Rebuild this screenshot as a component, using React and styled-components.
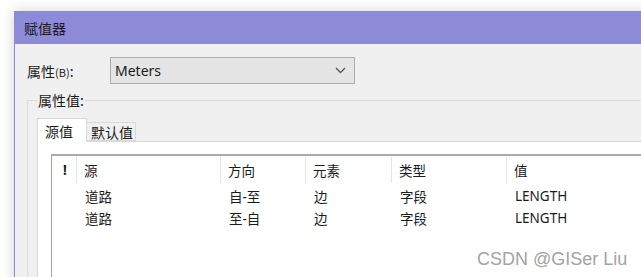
import React from 'react'
import styled, { createGlobalStyle } from 'styled-components'

const GlobalStyle = createGlobalStyle`
  html, body {
    margin: 0;
    padding: 0;
    background: #ffffff;
    overflow: hidden;
  }
  body {
    font-family: "Segoe UI", "Noto Sans", "Noto Sans CJK SC", sans-serif;
    color: #1b1b1b;
  }
`

const Page = styled.div`
  width: 641px;
  height: 277px;
  padding: 11px 0 0 14px;
  box-sizing: border-box;
  position: relative;
  overflow: hidden;
`

const Window = styled.div`
  width: 700px;
  height: 300px;
  background: #f0f0f0;
  border-left: 1px solid #8d8ad8;
  box-shadow: 0 0 12px rgba(0, 0, 0, 0.18);
`

const TitleBar = styled.div`
  height: 33px;
  background: #8d8ad8;
  display: flex;
  align-items: center;
  padding-left: 9px;
  font-size: 14px;
  color: #1a1a2a;
  font-family: "Noto Sans CJK SC", sans-serif;
`

const Body = styled.div`
  padding: 13px 0 0 12px;
`

const FieldRow = styled.div`
  display: flex;
  align-items: center;
  height: 27px;
`

const FieldLabel = styled.div`
  width: 83px;
  font-size: 14px;
  font-family: "Noto Sans CJK SC", sans-serif;

  small {
    font-size: 11px;
  }
`

const Combo = styled.div`
  box-sizing: border-box;
  width: 245px;
  height: 27px;
  border: 1px solid #adadad;
  background: #e5e5e5;
  display: flex;
  align-items: center;
  justify-content: space-between;
  padding: 0 8px 0 4px;
  font-size: 14px;
`

const Group = styled.fieldset`
  margin: 7px 0 0 0;
  padding: 0 0 0 9px;
  border: 1px solid #dcdcdc;
  border-right: none;
  border-bottom: none;
  height: 200px;
`

const Legend = styled.legend`
  padding: 0 1px;
  font-size: 14px;
  line-height: 18px;
  font-family: "Noto Sans CJK SC", sans-serif;
`

const TabStrip = styled.div`
  display: flex;
  align-items: flex-end;
  margin-top: 9px;
  position: relative;
  z-index: 1;
`

const Tab = styled.div`
  box-sizing: border-box;
  width: ${p => (p.$active ? '50px' : '49px')};
  height: ${p => (p.$active ? '24px' : '19px')};
  margin-bottom: ${p => (p.$active ? '-1px' : '0')};
  background: ${p => (p.$active ? '#ffffff' : '#f0f0f0')};
  border: 1px solid #d9d9d9;
  border-bottom: ${p => (p.$active ? 'none' : '1px solid #d9d9d9')};
  border-left: ${p => (p.$active ? '1px solid #d9d9d9' : 'none')};
  font-size: 14px;
  font-family: "Noto Sans CJK SC", sans-serif;
  display: flex;
  align-items: center;
  padding-left: ${p => (p.$active ? '7px' : '4px')};
  line-height: 1;
`

const Panel = styled.div`
  background: #ffffff;
  border: 1px solid #d9d9d9;
  border-right: none;
  height: 200px;
  padding: 13px 0 0 13px;
`

const ListView = styled.div`
  background: #ffffff;
  border-top: 2px solid #a9abb0;
  border-left: 1px solid #a0a3a8;
  margin-top: -1px;
  height: 200px;
`

const Grid = styled.div`
  display: grid;
  grid-template-columns: 25px 144px 85px 86px 115px 1fr;
  font-size: 13.5px;
  font-family: "Segoe UI", "Noto Sans", "Noto Sans CJK SC", sans-serif;
`

const HeadCell = styled.div`
  height: 26px;
  margin-top: 1px;
  margin-bottom: 2px;
  display: flex;
  align-items: center;
  padding-left: ${p => (p.$mark ? '11px' : '7px')};
  border-right: ${p => (p.$last ? 'none' : '1px solid #e5e5e5')};
  font-weight: ${p => (p.$mark ? 700 : 400)};
`

const Cell = styled.div`
  height: 22px;
  display: flex;
  align-items: center;
  padding-left: 8px;
`

const Watermark = styled.div`
  position: absolute;
  left: 477px;
  top: 249px;
  font-family: "Liberation Sans", Arial, sans-serif;
  font-size: 18px;
  color: #a3a3a3;
  text-shadow: 0 0 2px #ffffff;
`

const Chevron = () => (
  <svg width="11" height="7" viewBox="0 0 11 7">
    <path d="M1 1 L5.5 5.5 L10 1" fill="none" stroke="#555" strokeWidth="1.3" />
  </svg>
)

const columns = ['源', '方向', '元素', '类型', '值']
const rows = [
  ['道路', '自-至', '边', '字段', 'LENGTH'],
  ['道路', '至-自', '边', '字段', 'LENGTH'],
]

export default function App() {
  return (
    <Page>
      <GlobalStyle />
      <Window>
        <TitleBar>赋值器</TitleBar>
        <Body>
          <FieldRow>
            <FieldLabel>属性<small>(B)</small>:</FieldLabel>
            <Combo>
              <span>Meters</span>
              <Chevron />
            </Combo>
          </FieldRow>
          <Group>
            <Legend>属性值:</Legend>
            <TabStrip>
              <Tab $active>源值</Tab>
              <Tab>默认值</Tab>
            </TabStrip>
            <Panel>
              <ListView>
                <Grid>
                  <HeadCell $mark>!</HeadCell>
                  {columns.map((c, i) => (
                    <HeadCell key={c} $last={i === columns.length - 1}>{c}</HeadCell>
                  ))}
                  {rows.map((r, ri) => (
                    <React.Fragment key={ri}>
                      <Cell />
                      {r.map((v, ci) => (
                        <Cell key={ci}>{v}</Cell>
                      ))}
                    </React.Fragment>
                  ))}
                </Grid>
              </ListView>
            </Panel>
          </Group>
        </Body>
      </Window>
      <Watermark>CSDN @GISer Liu</Watermark>
    </Page>
  )
}
